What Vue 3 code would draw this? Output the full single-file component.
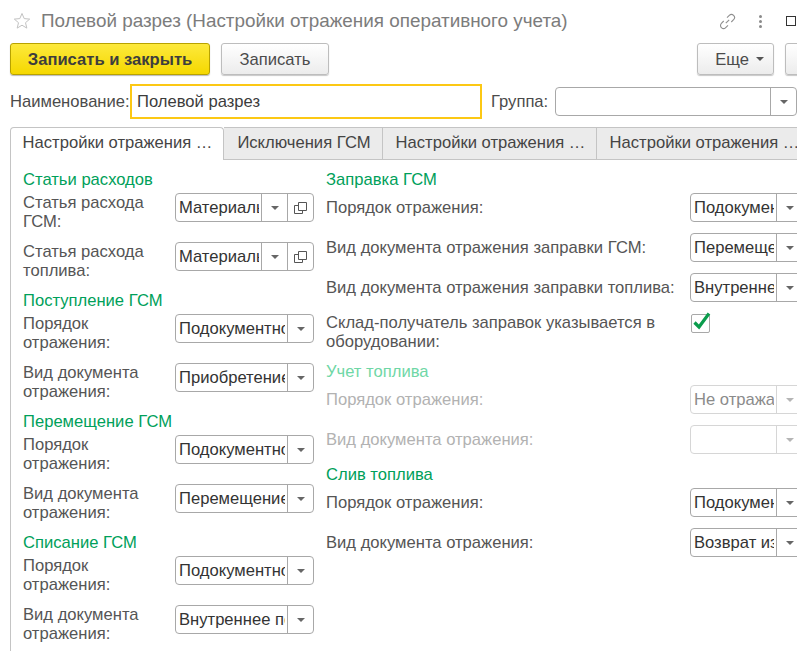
<script setup>
const left = [
  { title: 'Статьи расходов', rows: [
    { label: 'Статья расхода ГСМ:', value: 'Материальные', copy: true },
    { label: 'Статья расхода топлива:', value: 'Материальные', copy: true },
  ]},
  { title: 'Поступление ГСМ', rows: [
    { label: 'Порядок отражения:', value: 'Подокументно' },
    { label: 'Вид документа отражения:', value: 'Приобретение' },
  ]},
  { title: 'Перемещение ГСМ', rows: [
    { label: 'Порядок отражения:', value: 'Подокументно' },
    { label: 'Вид документа отражения:', value: 'Перемещение' },
  ]},
  { title: 'Списание ГСМ', rows: [
    { label: 'Порядок отражения:', value: 'Подокументно' },
    { label: 'Вид документа отражения:', value: 'Внутреннее по' },
  ]},
]
const right = [
  { title: 'Заправка ГСМ', rows: [
    { label: 'Порядок отражения:', value: 'Подокументно' },
    { label: 'Вид документа отражения заправки ГСМ:', value: 'Перемещение' },
    { label: 'Вид документа отражения заправки топлива:', value: 'Внутреннее' },
    { label: 'Склад-получатель заправок указывается в оборудовании:', check: true },
  ]},
  { title: 'Учет топлива', disabled: true, rows: [
    { label: 'Порядок отражения:', value: 'Не отражается' },
    { label: 'Вид документа отражения:', value: '' },
  ]},
  { title: 'Слив топлива', rows: [
    { label: 'Порядок отражения:', value: 'Подокументно' },
    { label: 'Вид документа отражения:', value: 'Возврат из' },
  ]},
]
const tabs = ['Настройки отражения …', 'Исключения ГСМ', 'Настройки отражения …', 'Настройки отражения …']
</script>

<template>
  <div class="page">
    <header class="head">
      <svg class="star" width="18" height="18" viewBox="0 0 18 18"><path d="M9 1.500l2.200 5.100 5.500.5-4.200 3.600 1.300 5.400L9 13.200l-4.800 2.900 1.300-5.400L1.300 7.100l5.500-.5z" fill="none" stroke="#c2c2c2" stroke-width="1"/></svg>
      <h1 class="title">Полевой разрез (Настройки отражения оперативного учета)</h1>
      <svg class="link" width="17" height="17" viewBox="0 0 17 17" fill="none" stroke="#8f8f8f" stroke-width="1.100"><path d="M6.800 10.200l3.400-3.400"/><path d="M8 4.700l2.300-2.300a3 3 0 0 1 4.300 4.300l-2.300 2.300"/><path d="M9 12.300l-2.300 2.300a3 3 0 0 1-4.300-4.300l2.300-2.300"/></svg>
      <span class="dots"><i></i><i></i><i></i></span>
      <span class="maxi"></span>
    </header>

    <div class="toolbar">
      <button class="btn primary">Записать и закрыть</button>
      <button class="btn plain">Записать</button>
      <span class="spacer"></span>
      <button class="btn more">Еще<i class="tri dark"></i></button>
      <button class="btn tail"></button>
    </div>

    <div class="namerow">
      <label class="lbl name">Наименование:</label>
      <div class="nameinput">Полевой разрез</div>
      <label class="lbl group">Группа:</label>
      <div class="combo groupbox"><span class="val"></span><span class="cbtn"><i class="tri"></i></span></div>
    </div>

    <nav class="tabs">
      <div v-for="(t, i) in tabs" :key="i" class="tab" :class="['t' + i, { active: i === 0 }]">{{ t }}</div>
    </nav>

    <section class="panel">
      <div class="col lcol">
        <div v-for="g in left" :key="g.title" class="grp">
          <div class="ghead">{{ g.title }}</div>
          <div v-for="r in g.rows" :key="r.label" class="row lrow">
            <div class="rlabel">{{ r.label }}</div>
            <div class="combo field">
              <span class="val">{{ r.value }}</span>
              <span class="cbtn"><i class="tri"></i></span>
              <span v-if="r.copy" class="cbtn">
                <svg width="13" height="12" viewBox="0 0 13 12" fill="none" stroke="#555" stroke-width="1"><path d="M4.500 .5h8v8h-8z"/><path d="M4.500 3.500h-4v8h8v-3"/></svg>
              </span>
            </div>
          </div>
        </div>
      </div>
      <div class="col rcol">
        <div v-for="g in right" :key="g.title" class="grp" :class="{ off: g.disabled }">
          <div class="ghead">{{ g.title }}</div>
          <div v-for="r in g.rows" :key="r.label" class="row rrow" :class="{ tall: r.check }">
            <div class="rlabel">{{ r.label }}</div>
            <div v-if="r.check" class="checkwrap">
              <span class="check"></span>
              <svg class="tick" width="20" height="20" viewBox="0 0 20 20" fill="none"><path d="M3.500 12.500l4.500 4.500L18 3.500" stroke="#0a9c4c" stroke-width="3.200"/></svg>
            </div>
            <div v-else class="combo field wide">
              <span class="val">{{ r.value }}</span>
              <span class="cbtn"><i class="tri"></i></span>
            </div>
          </div>
        </div>
      </div>
    </section>
  </div>
</template>

<style>
html, body { margin: 0; background: #fff; }
</style>

<style scoped>
.page {
  width: 797px; height: 651px; overflow: hidden; background: #fff; box-sizing: border-box;
  font-family: "Liberation Sans", Arial, sans-serif; font-size: 16.6px; line-height: 19px; color: #4b4b4b;
  display: flex; flex-direction: column;
}
.head { height: 43px; display: flex; align-items: center; padding: 0 1px 1px 13px; box-sizing: border-box; flex: none; }
.star { flex: none; }
.title { margin: 0 0 0 10px; font-size: 18.86px; font-weight: 400; line-height: 22px; color: #7c7c7c; white-space: nowrap; flex: 1; }
.link { flex: none; margin-right: 23px; }
.dots { display: flex; flex-direction: column; gap: 2px; margin-right: 24px; }
.dots i { width: 3px; height: 3px; background: #8a8a8a; border-radius: 50%; display: block; }
.maxi { width: 8px; height: 8px; border: 1px solid #333; flex: none; }

.toolbar { display: flex; height: 32px; padding-left: 10px; flex: none; }
.btn { box-sizing: border-box; height: 32px; border-radius: 3px; font: inherit; padding: 0; white-space: nowrap; cursor: default; }
.primary { width: 200px; border: 1px solid #b8a200; background: linear-gradient(#fde93c, #f5d800); color: #3d3d3d; font-weight: 700; box-shadow: 0 1px 1px #bbb; }
.plain, .more, .tail { border: 1px solid #bdbdbd; background: linear-gradient(#fff, #ececec); color: #4b4b4b; box-shadow: 0 1px 1px #c8c8c8; }
.plain { width: 108px; margin-left: 11px; }
.spacer { flex: 1; }
.more { width: 77px; display: flex; align-items: center; justify-content: flex-end; padding-right: 9px; gap: 7px; }
.tail { width: 40px; margin-left: 11px; flex: none; margin-right: -28px; }

.namerow { display: flex; align-items: center; height: 35px; margin-top: 9px; padding-left: 10px; flex: none; }
.lbl { white-space: nowrap; flex: none; }
.name { width: 116px; }
.nameinput { box-sizing: border-box; width: 352px; height: 35px; margin-left: 4px; border: 2px solid #fcc814; padding-left: 5px; line-height: 31px; color: #3c3c3c; flex: none; }
.group { margin-left: 9px; width: 56px; }
.groupbox { width: 242px; margin-left: 8px; flex: none; }

.combo { box-sizing: border-box; height: 29px; border: 1px solid #a8a8a8; border-radius: 4px; display: flex; background: #fff; color: #333; }
.val { flex: 1; min-width: 0; overflow: hidden; white-space: nowrap; padding-left: 3px; margin-right: 2px; line-height: 27px; }
.cbtn { width: 26px; flex: none; border-left: 1px solid #a8a8a8; display: flex; align-items: center; justify-content: center; box-sizing: border-box; }
.tri { display: block; width: 0; height: 0; border: 4px solid transparent; border-top-color: #666; border-bottom: 0; }
.tri.dark { border-top-color: #555; }

.tabs { display: flex; height: 33px; margin-top: 8px; padding-left: 10px; flex: none; box-sizing: border-box; }
.tab { box-sizing: border-box; height: 33px; border: 1px solid #c4c4c4; border-left: 0; background: #ebebeb; padding: 5px 0 0 2px; text-align: center; white-space: nowrap; color: #444; flex: none; }
.t0 { width: 214px; }
.t1 { width: 159px; }
.t2 { width: 214px; }
.t3 { width: 214px; }
.active { background: #fff; border-left: 1px solid #c4c4c4; border-bottom: 0; border-radius: 4px 4px 0 0; padding-left: 1px; }

.panel { flex: 1; margin-left: 10px; border-left: 1px solid #c4c4c4; padding: 10px 0 0 12px; display: flex; gap: 12px; min-height: 0; }
.col { display: flex; flex-direction: column; gap: 11px; flex: none; }
.lcol { width: 291px; }
.rcol { width: 477px; }
.grp { display: flex; flex-direction: column; gap: 11px; }
.ghead { color: #00a05a; margin-bottom: -7px; white-space: nowrap; }
.row { display: flex; justify-content: space-between; }
.lrow .rlabel { width: 150px; color: #555; }
.rrow { align-items: center; }
.rrow.tall { align-items: flex-start; }
.rrow .rlabel { width: 355px; color: #555; }
.field { width: 139px; flex: none; }
.wide { width: 113px; }
.checkwrap { width: 113px; position: relative; height: 38px; flex: none; }
.check { position: absolute; left: 1px; top: 1px; width: 17px; height: 17px; border: 1px solid #a8a8a8; border-radius: 2px; background: #fff; }
.tick { position: absolute; left: 1px; top: -3px; }

.off .ghead { color: #6fd7a6; }
.off .rlabel { color: #b2b2b2; }
.off .combo { border-color: #d6d6d6; color: #8b8b8b; }
.off .cbtn { border-left-color: #d6d6d6; }
.off .tri { border-top-color: #b5b5b5; }
</style>
